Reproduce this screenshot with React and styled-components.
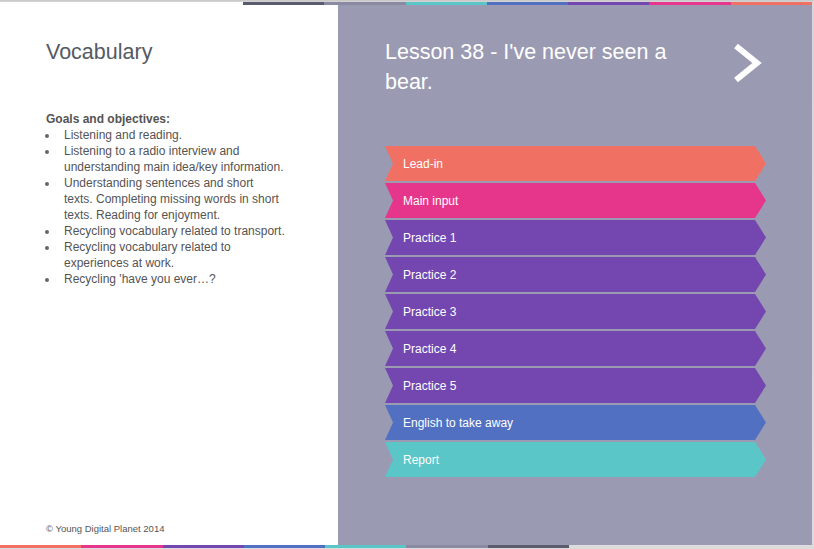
import styled, { createGlobalStyle } from "styled-components";

const GlobalStyle = createGlobalStyle`
  html, body {
    margin: 0;
    padding: 0;
    background: #d2d2d2;
  }
  body {
    font-family: "Liberation Sans", Arial, sans-serif;
  }
`;

const stripeColors = [
  "#f07163",
  "#e5368c",
  "#7446b0",
  "#5270c2",
  "#5bc6c8",
  "#8a8aa2",
  "#5a5c6e",
];

const sections = [
  { label: "Lead-in", color: "#f07163" },
  { label: "Main input", color: "#e5368c" },
  { label: "Practice 1", color: "#7446b0" },
  { label: "Practice 2", color: "#7446b0" },
  { label: "Practice 3", color: "#7446b0" },
  { label: "Practice 4", color: "#7446b0" },
  { label: "Practice 5", color: "#7446b0" },
  { label: "English to take away", color: "#5270c2" },
  { label: "Report", color: "#5bc6c8" },
];

const goals = [
  "Listening and reading.",
  "Listening to a radio interview and understanding main idea/key information.",
  "Understanding sentences and short texts. Completing missing words in short texts. Reading for enjoyment.",
  "Recycling vocabulary related to transport.",
  "Recycling vocabulary related to experiences at work.",
  "Recycling 'have you ever…?",
];

export default function App() {
  return (
    <>
      <GlobalStyle />
      <Frame>
        <Stage>
          <Stripe $reverse $fill="#ffffff">
            {stripeColors.map((c) => (
              <StripeSegment key={c} $color={c} />
            ))}
          </Stripe>
          <Main>
            <InfoPane>
              <PageTitle>Vocabulary</PageTitle>
              <GoalsHeading>Goals and objectives:</GoalsHeading>
              <GoalList>
                {goals.map((g) => (
                  <GoalItem key={g}>{g}</GoalItem>
                ))}
              </GoalList>
              <Copyright>© Young Digital Planet 2014</Copyright>
            </InfoPane>
            <LessonPane>
              <LessonHeader>
                <LessonTitle>Lesson 38 - I've never seen a bear.</LessonTitle>
                <NextButton aria-label="Next">
                  <svg width="30" height="40" viewBox="0 0 30 40">
                    <path
                      d="M4 3 L25 20 L4 37"
                      fill="none"
                      stroke="#ffffff"
                      strokeWidth="6"
                      strokeLinejoin="miter"
                    />
                  </svg>
                </NextButton>
              </LessonHeader>
              <SectionList>
                {sections.map((s) => (
                  <SectionItem key={s.label} $color={s.color}>
                    {s.label}
                  </SectionItem>
                ))}
              </SectionList>
            </LessonPane>
          </Main>
          <Stripe>
            {stripeColors.map((c) => (
              <StripeSegment key={c} $color={c} />
            ))}
          </Stripe>
        </Stage>
      </Frame>
    </>
  );
}

const Frame = styled.div`
  width: 814px;
  height: 549px;
  padding: 2px 2px 1px 0;
  box-sizing: border-box;
  background: linear-gradient(#c6c6c6, #d6d6d6 2px, #dcdcdc);
`;

const Stage = styled.div`
  display: flex;
  flex-direction: column;
  height: 546px;
`;

const Stripe = styled.div`
  display: flex;
  flex-direction: ${(p) => (p.$reverse ? "row-reverse" : "row")};
  height: 3px;
  background: ${(p) => p.$fill || "transparent"};
`;

const StripeSegment = styled.div`
  width: 81.3px;
  background: ${(p) => p.$color};
`;

const Main = styled.div`
  display: flex;
  height: 540px;
`;

const InfoPane = styled.div`
  width: 338px;
  box-sizing: border-box;
  padding: 32px 0 10px 46px;
  background: #ffffff;
  display: flex;
  flex-direction: column;
  color: #545454;
`;

const PageTitle = styled.h1`
  margin: 0;
  font-size: 21.5px;
  line-height: 30px;
  font-weight: normal;
  color: #555a62;
`;

const GoalsHeading = styled.div`
  margin-top: 44px;
  font-size: 12px;
  line-height: 16px;
  font-weight: bold;
`;

const GoalList = styled.ul`
  margin: 0;
  padding: 0;
  list-style: none;
  width: 239px;
`;

const GoalItem = styled.li`
  display: grid;
  grid-template-columns: 18px 1fr;
  font-size: 12px;
  line-height: 16px;

  &::before {
    content: "";
    width: 4px;
    height: 4px;
    border-radius: 50%;
    background: #666666;
    margin: 7px 0 0 -1px;
  }
`;

const Copyright = styled.div`
  margin-top: auto;
  font-size: 9.5px;
  line-height: 12px;
  color: #555555;
`;

const LessonPane = styled.div`
  flex: 1;
  box-sizing: border-box;
  padding: 32px 0 0 47px;
  background: #9a9ab2;
  color: #ffffff;
`;

const LessonHeader = styled.div`
  display: flex;
  justify-content: space-between;
  align-items: flex-start;
  padding-right: 50px;
`;

const LessonTitle = styled.h2`
  margin: 0;
  width: 300px;
  font-size: 21.5px;
  line-height: 30px;
  font-weight: normal;
`;

const NextButton = styled.div`
  margin-top: 6px;
  line-height: 0;
  cursor: pointer;
`;

const SectionList = styled.div`
  margin-top: 49px;
  display: flex;
  flex-direction: column;
  gap: 2px;
  width: 381px;
`;

const SectionItem = styled.div`
  height: 35px;
  display: flex;
  align-items: center;
  padding-left: 18px;
  background: ${(p) => p.$color};
  clip-path: polygon(
    0 0,
    calc(100% - 11px) 0,
    100% 50%,
    calc(100% - 11px) 100%,
    0 100%,
    8px 50%
  );
  font-size: 12px;
  color: #ffffff;
  cursor: pointer;
`;
